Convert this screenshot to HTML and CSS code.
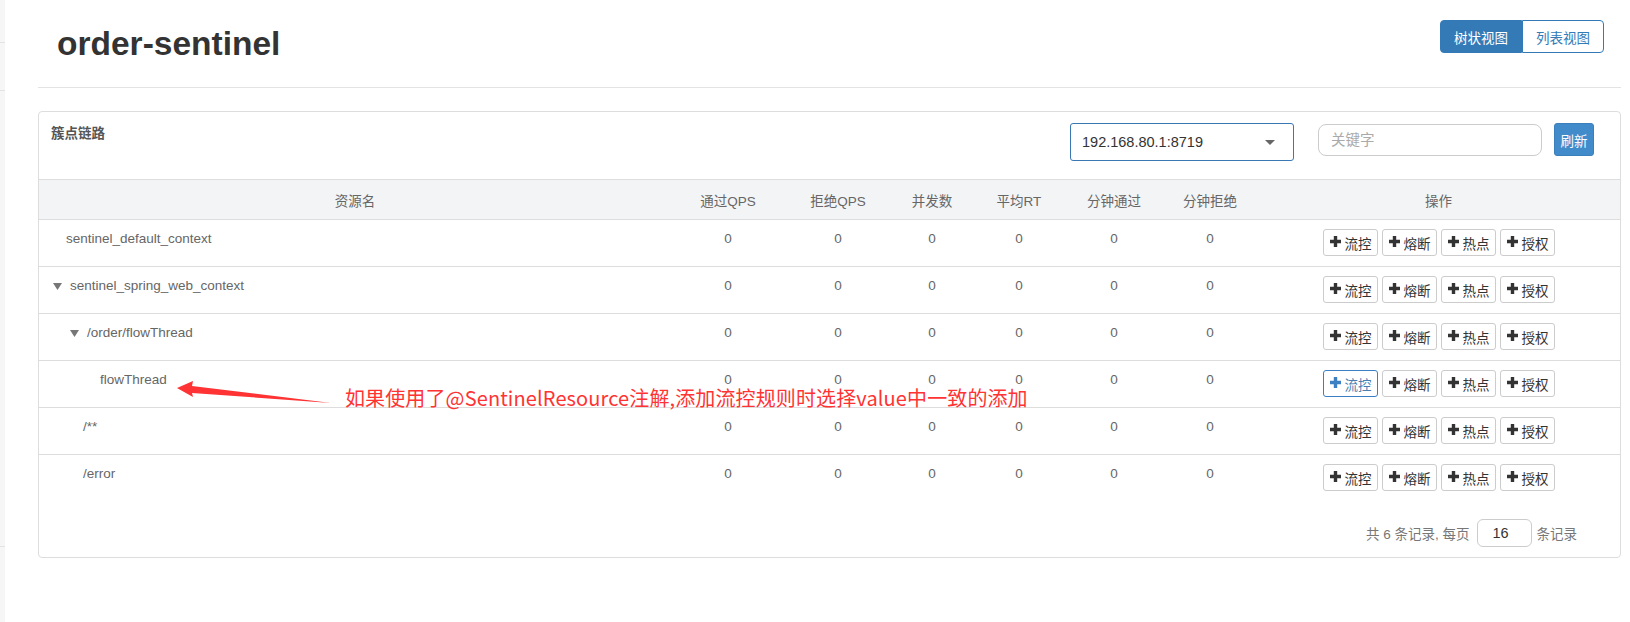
FILE: index.html
```html
<!DOCTYPE html>
<html lang="zh-CN">
<head>
<meta charset="utf-8">
<title>order-sentinel</title>
<link rel="stylesheet" href="styles.css">
</head>
<body>
<div class="page">
  <aside class="strip">
    <div class="strip-a"></div>
    <div class="strip-b"></div>
    <div class="strip-c"></div>
  </aside>
  <main class="main">
    <header class="head">
      <h1 class="title">order-sentinel</h1>
      <div class="views">
        <button class="view active">树状视图</button>
        <button class="view">列表视图</button>
      </div>
    </header>

    <section class="panel">
      <div class="panel-head">
        <span class="panel-title">簇点链路</span>
        <div class="tools">
          <div class="select">
            <span>192.168.80.1:8719</span>
            <svg class="caret" width="10" height="5" viewBox="0 0 10 5"><path d="M0 0h10L5 5z"/></svg>
          </div>
          <input class="search" type="text" placeholder="关键字">
          <button class="refresh">刷新</button>
        </div>
      </div>

      <div class="table">
        <div class="row thead">
          <div>资源名</div><div>通过QPS</div><div>拒绝QPS</div><div>并发数</div><div>平均RT</div><div>分钟通过</div><div>分钟拒绝</div><div>操作</div>
        </div>

        <div class="row">
          <div class="cell name l0">sentinel_default_context</div>
          <div class="cell">0</div><div class="cell">0</div><div class="cell">0</div><div class="cell">0</div><div class="cell">0</div><div class="cell">0</div>
          <div class="ops">
            <button class="op"><svg class="plus" viewBox="0 0 11 11"><path d="M3.8 0h3.4v3.8H11v3.4H7.2V11H3.8V7.2H0V3.8h3.8z"/></svg>流控</button>
            <button class="op"><svg class="plus" viewBox="0 0 11 11"><path d="M3.8 0h3.4v3.8H11v3.4H7.2V11H3.8V7.2H0V3.8h3.8z"/></svg>熔断</button>
            <button class="op"><svg class="plus" viewBox="0 0 11 11"><path d="M3.8 0h3.4v3.8H11v3.4H7.2V11H3.8V7.2H0V3.8h3.8z"/></svg>热点</button>
            <button class="op"><svg class="plus" viewBox="0 0 11 11"><path d="M3.8 0h3.4v3.8H11v3.4H7.2V11H3.8V7.2H0V3.8h3.8z"/></svg>授权</button>
          </div>
        </div>

        <div class="row">
          <div class="cell name l1"><svg class="tri" viewBox="0 0 9 7"><path d="M0 0h9L4.5 7z"/></svg>sentinel_spring_web_context</div>
          <div class="cell">0</div><div class="cell">0</div><div class="cell">0</div><div class="cell">0</div><div class="cell">0</div><div class="cell">0</div>
          <div class="ops">
            <button class="op"><svg class="plus" viewBox="0 0 11 11"><path d="M3.8 0h3.4v3.8H11v3.4H7.2V11H3.8V7.2H0V3.8h3.8z"/></svg>流控</button>
            <button class="op"><svg class="plus" viewBox="0 0 11 11"><path d="M3.8 0h3.4v3.8H11v3.4H7.2V11H3.8V7.2H0V3.8h3.8z"/></svg>熔断</button>
            <button class="op"><svg class="plus" viewBox="0 0 11 11"><path d="M3.8 0h3.4v3.8H11v3.4H7.2V11H3.8V7.2H0V3.8h3.8z"/></svg>热点</button>
            <button class="op"><svg class="plus" viewBox="0 0 11 11"><path d="M3.8 0h3.4v3.8H11v3.4H7.2V11H3.8V7.2H0V3.8h3.8z"/></svg>授权</button>
          </div>
        </div>

        <div class="row">
          <div class="cell name l2"><svg class="tri" viewBox="0 0 9 7"><path d="M0 0h9L4.5 7z"/></svg>/order/flowThread</div>
          <div class="cell">0</div><div class="cell">0</div><div class="cell">0</div><div class="cell">0</div><div class="cell">0</div><div class="cell">0</div>
          <div class="ops">
            <button class="op"><svg class="plus" viewBox="0 0 11 11"><path d="M3.8 0h3.4v3.8H11v3.4H7.2V11H3.8V7.2H0V3.8h3.8z"/></svg>流控</button>
            <button class="op"><svg class="plus" viewBox="0 0 11 11"><path d="M3.8 0h3.4v3.8H11v3.4H7.2V11H3.8V7.2H0V3.8h3.8z"/></svg>熔断</button>
            <button class="op"><svg class="plus" viewBox="0 0 11 11"><path d="M3.8 0h3.4v3.8H11v3.4H7.2V11H3.8V7.2H0V3.8h3.8z"/></svg>热点</button>
            <button class="op"><svg class="plus" viewBox="0 0 11 11"><path d="M3.8 0h3.4v3.8H11v3.4H7.2V11H3.8V7.2H0V3.8h3.8z"/></svg>授权</button>
          </div>
        </div>

        <div class="row">
          <div class="cell name l3">flowThread</div>
          <div class="cell">0</div><div class="cell">0</div><div class="cell">0</div><div class="cell">0</div><div class="cell">0</div><div class="cell">0</div>
          <div class="ops">
            <button class="op focus"><svg class="plus" viewBox="0 0 11 11"><path d="M3.8 0h3.4v3.8H11v3.4H7.2V11H3.8V7.2H0V3.8h3.8z"/></svg>流控</button>
            <button class="op"><svg class="plus" viewBox="0 0 11 11"><path d="M3.8 0h3.4v3.8H11v3.4H7.2V11H3.8V7.2H0V3.8h3.8z"/></svg>熔断</button>
            <button class="op"><svg class="plus" viewBox="0 0 11 11"><path d="M3.8 0h3.4v3.8H11v3.4H7.2V11H3.8V7.2H0V3.8h3.8z"/></svg>热点</button>
            <button class="op"><svg class="plus" viewBox="0 0 11 11"><path d="M3.8 0h3.4v3.8H11v3.4H7.2V11H3.8V7.2H0V3.8h3.8z"/></svg>授权</button>
          </div>
        </div>

        <div class="row">
          <div class="cell name l4">/**</div>
          <div class="cell">0</div><div class="cell">0</div><div class="cell">0</div><div class="cell">0</div><div class="cell">0</div><div class="cell">0</div>
          <div class="ops">
            <button class="op"><svg class="plus" viewBox="0 0 11 11"><path d="M3.8 0h3.4v3.8H11v3.4H7.2V11H3.8V7.2H0V3.8h3.8z"/></svg>流控</button>
            <button class="op"><svg class="plus" viewBox="0 0 11 11"><path d="M3.8 0h3.4v3.8H11v3.4H7.2V11H3.8V7.2H0V3.8h3.8z"/></svg>熔断</button>
            <button class="op"><svg class="plus" viewBox="0 0 11 11"><path d="M3.8 0h3.4v3.8H11v3.4H7.2V11H3.8V7.2H0V3.8h3.8z"/></svg>热点</button>
            <button class="op"><svg class="plus" viewBox="0 0 11 11"><path d="M3.8 0h3.4v3.8H11v3.4H7.2V11H3.8V7.2H0V3.8h3.8z"/></svg>授权</button>
          </div>
        </div>

        <div class="row last">
          <div class="cell name l4">/error</div>
          <div class="cell">0</div><div class="cell">0</div><div class="cell">0</div><div class="cell">0</div><div class="cell">0</div><div class="cell">0</div>
          <div class="ops">
            <button class="op"><svg class="plus" viewBox="0 0 11 11"><path d="M3.8 0h3.4v3.8H11v3.4H7.2V11H3.8V7.2H0V3.8h3.8z"/></svg>流控</button>
            <button class="op"><svg class="plus" viewBox="0 0 11 11"><path d="M3.8 0h3.4v3.8H11v3.4H7.2V11H3.8V7.2H0V3.8h3.8z"/></svg>熔断</button>
            <button class="op"><svg class="plus" viewBox="0 0 11 11"><path d="M3.8 0h3.4v3.8H11v3.4H7.2V11H3.8V7.2H0V3.8h3.8z"/></svg>热点</button>
            <button class="op"><svg class="plus" viewBox="0 0 11 11"><path d="M3.8 0h3.4v3.8H11v3.4H7.2V11H3.8V7.2H0V3.8h3.8z"/></svg>授权</button>
          </div>
        </div>
      </div>

      <div class="pager">
        <span>共 6 条记录, 每页</span>
        <span class="size">16</span>
        <span>条记录</span>
      </div>
    </section>
  </main>
</div>

<div class="note">
  <svg class="arrow" width="170" height="35" viewBox="0 0 170 35"><path d="M7 13L23 6L22 11L161 28L22 18L23 22Z"/></svg>
  <span class="note-text">如果使用了@SentinelResource注解,添加流控规则时选择value中一致的添加</span>
</div>
</body>
</html>
```

FILE: styles.css
```css
* { box-sizing: border-box; }

html, body {
  margin: 0;
  padding: 0;
  background: #fff;
}

body {
  font-family: "Liberation Sans", Arial, "Noto Sans CJK SC", sans-serif;
  font-size: 13.5px;
  color: #666;
  position: relative;
  width: 1630px;
  height: 622px;
  overflow: hidden;
}

.page {
  display: flex;
  min-height: 622px;
}

/* left edge of a sidebar */
.strip {
  width: 5px;
  flex: none;
  background: #f6f6f6;
  display: flex;
  flex-direction: column;
}
.strip-a { height: 43px; border-bottom: 1px solid #e3e3e3; }
.strip-b { height: 48px; border-bottom: 1px solid #e3e3e3; }
.strip-c { height: 456px; border-bottom: 1px solid #e3e3e3; }

.main {
  flex: 1;
  padding: 0 9px 0 33px;
}

/* header */
.head {
  height: 88px;
  border-bottom: 1px solid #e3e3e3;
  display: flex;
  justify-content: space-between;
  align-items: flex-start;
}

.title {
  margin: 25px 0 0 19px;
  font-size: 33.5px;
  line-height: 37px;
  font-weight: bold;
  color: #333;
}

.views {
  display: flex;
  margin: 20px 17px 0 0;
}

.view {
  height: 33px;
  padding: 0 13px;
  font-family: inherit;
  font-size: 13.5px;
  border: 1px solid #337ab7;
  background: #fff;
  color: #337ab7;
  border-radius: 0 4px 4px 0;
}

.view.active {
  background: #337ab7;
  color: #fff;
  border-radius: 4px 0 0 4px;
}

/* panel */
.panel {
  margin-top: 23px;
  border: 1px solid #ddd;
  border-radius: 4px;
}

.panel-head {
  height: 67px;
  display: flex;
  justify-content: space-between;
  align-items: flex-start;
  padding: 0 26px 0 12px;
}

.panel-title {
  margin-top: 12px;
  line-height: 19px;
  font-weight: bold;
  color: #555;
}

.tools {
  display: flex;
  align-items: flex-start;
  margin-top: 11px;
}

.select {
  width: 224px;
  height: 38px;
  border: 1px solid #3a78b4;
  border-radius: 3px;
  display: flex;
  align-items: center;
  justify-content: space-between;
  padding: 0 18px 0 11px;
  font-size: 14.5px;
  color: #333;
}

.caret { fill: #666; }

.search {
  margin: 1px 0 0 24px;
  width: 224px;
  height: 32px;
  border: 1px solid #ccc;
  border-radius: 8px;
  padding: 0 12px;
  font-family: inherit;
  font-size: 14.5px;
  outline: none;
}
.search::placeholder { color: #aaa; }

.refresh {
  margin-left: 12px;
  width: 40px;
  height: 33px;
  padding: 0;
  background: #428bca;
  color: #fff;
  border: 1px solid #3b80bd;
  border-radius: 3px;
  font-family: inherit;
  font-size: 13.5px;
}

/* table */
.row {
  display: grid;
  grid-template-columns: 632px 114px 106px 82px 92px 98px 94px 1fr;
  height: 47px;
  border-bottom: 1px solid #ddd;
}

.row.last {
  height: 46px;
  border-bottom: none;
}

.thead {
  height: 41px;
  border-top: 1px solid #ddd;
  background: #f3f4f6;
  align-items: center;
  text-align: center;
}

.cell {
  padding-top: 9px;
  line-height: 19px;
  text-align: center;
}

.cell.name {
  text-align: left;
  display: flex;
  align-items: flex-start;
}

.l0 { padding-left: 27px; }
.l1 { padding-left: 14px; }
.l2 { padding-left: 31px; }
.l3 { padding-left: 61px; }
.l4 { padding-left: 44px; }

.tri {
  width: 9px;
  height: 7px;
  margin: 7px 8px 0 0;
  fill: #777;
  flex: none;
}

.ops {
  display: flex;
  justify-content: center;
  align-items: flex-start;
  gap: 4px;
  padding-top: 9px;
}

.op {
  height: 27px;
  padding: 0 5px 0 6px;
  border: 1px solid #ccc;
  border-radius: 3px;
  background: #fff;
  display: flex;
  align-items: center;
  gap: 4px;
  color: #333;
  font-family: inherit;
  font-size: 13.5px;
}

.plus {
  width: 11px;
  height: 11px;
  fill: #333;
  margin-top: -2px;
}

.op.focus {
  border-color: #3c7fc2;
  color: #4a7fb2;
}
.op.focus .plus { fill: #3c7fc2; }

/* pager */
.pager {
  display: flex;
  justify-content: flex-end;
  align-items: center;
  padding: 18px 43px 10px 0;
  color: #777;
}

.size {
  width: 55px;
  height: 28px;
  margin: 0 5px 0 7px;
  padding-left: 15px;
  border: 1px solid #ccc;
  border-radius: 6px;
  color: #333;
  font-size: 14.5px;
  line-height: 26px;
}

/* screenshot annotation overlay */
.note {
  position: absolute;
  left: 0;
  top: 0;
  pointer-events: none;
}

.arrow {
  position: absolute;
  left: 170px;
  top: 375px;
  fill: #f33;
}

.note-text {
  position: absolute;
  left: 345px;
  top: 388px;
  white-space: nowrap;
  font-family: "Noto Sans CJK SC", sans-serif;
  font-size: 20px;
  line-height: 20px;
  letter-spacing: 0.12px;
  color: #f33;
}
```
